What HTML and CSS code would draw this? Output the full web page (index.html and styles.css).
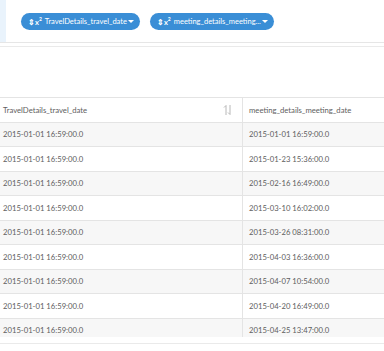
FILE: index.html
```html
<!DOCTYPE html>
<html lang="en">
<head>
  <meta charset="UTF-8">
  <title>Table view</title>
  <link rel="stylesheet" href="styles.css">
</head>
<body>
  <div class="fields-bar">
    <div class="fields-strip"></div>
    <div class="fields-list">
      <span class="field-pill"><span class="pill-icon">&#8661;x<sup>2</sup></span>TravelDetails_travel_date<span class="caret"></span></span>
      <span class="field-pill"><span class="pill-icon">&#8661;x<sup>2</sup></span>meeting_details_meeting...<span class="caret"></span></span>
    </div>
  </div>
  <div class="bar-rule"></div>

  <div class="table-wrap">
    <div class="data-table">
      <div class="row head">
        <div class="cell col-one">TravelDetails_travel_date
          <svg class="sort-icon" viewBox="0 0 10 12" width="10" height="12">
            <path d="M3 11V1.5M1 3.5L3 1.5" fill="none" stroke="#b0b0b0" stroke-width="0.9"/>
            <path d="M7 1v9.5M5 8.5L7 10.5" fill="none" stroke="#b0b0b0" stroke-width="0.9"/>
          </svg>
        </div>
        <div class="cell">meeting_details_meeting_date</div>
      </div>
      <div class="row"><div class="cell col-one">2015-01-01 16:59:00.0</div><div class="cell">2015-01-01 16:59:00.0</div></div>
      <div class="row"><div class="cell col-one">2015-01-01 16:59:00.0</div><div class="cell">2015-01-23 15:36:00.0</div></div>
      <div class="row"><div class="cell col-one">2015-01-01 16:59:00.0</div><div class="cell">2015-02-16 16:49:00.0</div></div>
      <div class="row"><div class="cell col-one">2015-01-01 16:59:00.0</div><div class="cell">2015-03-10 16:02:00.0</div></div>
      <div class="row"><div class="cell col-one">2015-01-01 16:59:00.0</div><div class="cell">2015-03-26 08:31:00.0</div></div>
      <div class="row"><div class="cell col-one">2015-01-01 16:59:00.0</div><div class="cell">2015-04-03 16:36:00.0</div></div>
      <div class="row"><div class="cell col-one">2015-01-01 16:59:00.0</div><div class="cell">2015-04-07 10:54:00.0</div></div>
      <div class="row"><div class="cell col-one">2015-01-01 16:59:00.0</div><div class="cell">2015-04-20 16:49:00.0</div></div>
      <div class="row"><div class="cell col-one">2015-01-01 16:59:00.0</div><div class="cell">2015-04-25 13:47:00.0</div></div>
    </div>
  </div>
  <div class="table-foot"></div>
</body>
</html>
```

FILE: styles.css
```css
body {
  margin: 0;
  width: 384px;
  height: 351px;
  overflow: hidden;
  background: #fff;
  font-family: Lato, "Liberation Sans", sans-serif;
  color: #5e5e5e;
}

/* field pills on top */
.fields-bar {
  display: flex;
  height: 42px;
  border-bottom: 1px solid #e6e6e6;
}
.fields-strip {
  width: 6px;
  background: #e9f3fc;
}
.fields-list {
  display: flex;
  gap: 10px;
  padding: 13px 0 0 15px;
  align-items: flex-start;
}
.field-pill {
  display: inline-flex;
  align-items: center;
  height: 17px;
  padding: 0 6px 0 7px;
  border-radius: 9px;
  background: #3a8ed6;
  color: #fff;
  font-size: 7.5px;
  white-space: nowrap;
}
.pill-icon {
  font-weight: bold;
  margin-right: 3px;
}
.pill-icon sup {
  font-size: 5px;
}
.caret {
  margin-left: 1px;
  border-left: 3px solid transparent;
  border-right: 3px solid transparent;
  border-top: 3px solid #fff;
}
.bar-rule {
  height: 3px;
  border-bottom: 1px solid #eaeaea;
}

/* data table */
.table-wrap {
  margin-top: 50px;
  height: 240px;
  overflow: hidden;
}
.data-table {
  font-size: 7.7px;
}
.row {
  display: flex;
  height: 24.5px;
  box-sizing: border-box;
  border-top: 1px solid #e4e4e4;
}
.row:nth-child(even) {
  background: #f7f7f7;
}
.cell {
  display: flex;
  align-items: center;
  padding-left: 6px;
  white-space: nowrap;
}
.col-one {
  position: relative;
  width: 243px;
  padding-left: 3px;
  box-sizing: border-box;
  border-right: 1px solid #e4e4e4;
}
.sort-icon {
  position: absolute;
  right: 9px;
  top: 6px;
}
.table-foot {
  height: 6px;
  border-bottom: 1px solid #eaeaea;
}
```
